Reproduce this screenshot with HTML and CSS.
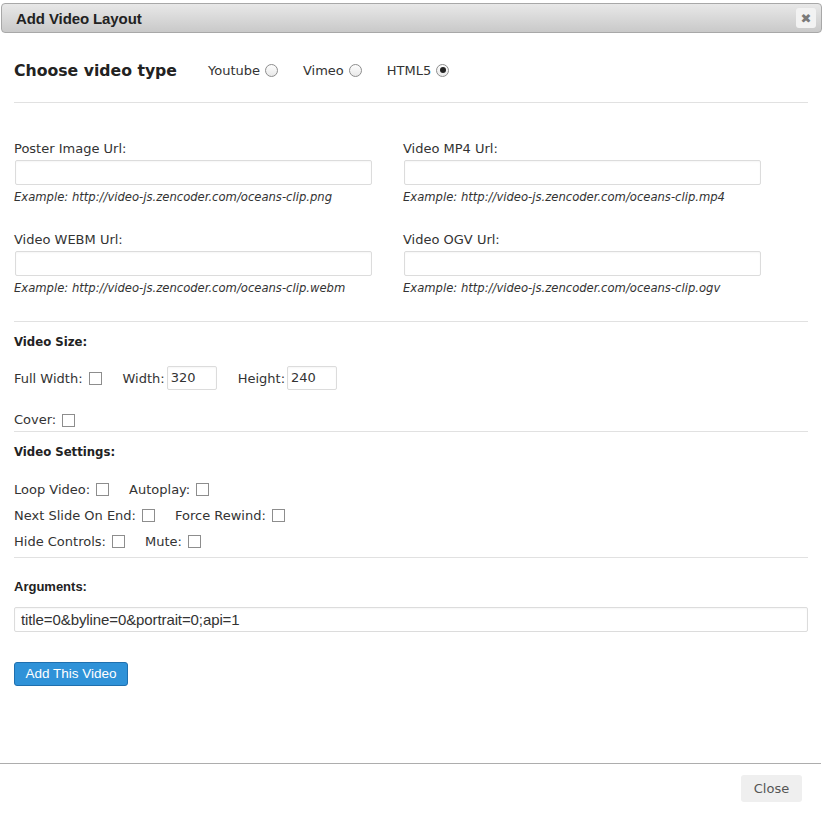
FILE: index.html
```html
<!DOCTYPE html>
<html>
<head>
<meta charset="utf-8">
<title>Add Video Layout</title>
<link rel="stylesheet" href="styles.css">
</head>
<body>
<div class="dialog">
  <div class="titlebar">
    <span class="title">Add Video Layout</span>
    <span class="x-btn">&#x2716;</span>
  </div>
  <div class="content">
    <div class="typerow">
      <h2 class="heading">Choose video type</h2>
      <label class="radio-item">Youtube <span class="radio"></span></label>
      <label class="radio-item">Vimeo <span class="radio"></span></label>
      <label class="radio-item">HTML5 <span class="radio checked"></span></label>
    </div>
    <div class="hr"></div>
    <div class="fields">
      <div class="field">
        <div class="label">Poster Image Url:</div>
        <div class="input url"></div>
        <div class="example">Example: http://video-js.zencoder.com/oceans-clip.png</div>
      </div>
      <div class="field">
        <div class="label">Video MP4 Url:</div>
        <div class="input url"></div>
        <div class="example">Example: http://video-js.zencoder.com/oceans-clip.mp4</div>
      </div>
      <div class="field">
        <div class="label">Video WEBM Url:</div>
        <div class="input url"></div>
        <div class="example">Example: http://video-js.zencoder.com/oceans-clip.webm</div>
      </div>
      <div class="field">
        <div class="label">Video OGV Url:</div>
        <div class="input url"></div>
        <div class="example">Example: http://video-js.zencoder.com/oceans-clip.ogv</div>
      </div>
    </div>
    <div class="hr hr-size"></div>
    <div class="section-title st-size">Video Size:</div>
    <div class="size-row">
      <span class="opt">Full Width: <span class="cb"></span></span>
      <span class="opt">Width: <span class="input small">320</span></span>
      <span class="opt">Height: <span class="input small">240</span></span>
    </div>
    <div class="cover-row"><span class="opt">Cover: <span class="cb"></span></span></div>
    <div class="hr hr-thin"></div>
    <div class="section-title st-settings">Video Settings:</div>
    <div class="settings">
      <div class="set-row"><span class="opt">Loop Video: <span class="cb"></span></span><span class="opt">Autoplay: <span class="cb"></span></span></div>
      <div class="set-row"><span class="opt">Next Slide On End: <span class="cb"></span></span><span class="opt">Force Rewind: <span class="cb"></span></span></div>
      <div class="set-row"><span class="opt">Hide Controls: <span class="cb"></span></span><span class="opt">Mute: <span class="cb"></span></span></div>
    </div>
    <div class="hr hr-thin"></div>
    <div class="args-title">Arguments:</div>
    <div class="input args">title=0&amp;byline=0&amp;portrait=0;api=1</div>
    <div class="btn-primary">Add This Video</div>
  </div>
  <div class="footer">
    <span class="btn-close">Close</span>
  </div>
</div>
</body>
</html>
```
FILE: styles.css
```css
html, body {
  margin: 0;
  padding: 0;
  background: #fff;
}
body {
  width: 823px;
  height: 816px;
  overflow: hidden;
  font-family: "DejaVu Sans", Verdana, sans-serif;
  font-size: 13px;
  color: #333;
}
.dialog {
  width: 823px;
}
.titlebar {
  margin: 3px 1px 0 1px;
  height: 28px;
  border: 1px solid #a8a8a8;
  border-radius: 4px;
  background: linear-gradient(#e8e8e8, #c9c9c9);
  display: flex;
  align-items: center;
  justify-content: space-between;
  padding: 0 5px 0 14px;
}
.title {
  font-family: "Liberation Sans", Arial, sans-serif;
  font-weight: bold;
  font-size: 15px;
  color: #222;
  letter-spacing: -0.1px;
}
.x-btn {
  width: 20px;
  height: 20px;
  background: #f2f2f2;
  border-radius: 3px;
  display: flex;
  align-items: center;
  justify-content: center;
  color: #7a7a7a;
  font-size: 13px;
  font-family: "DejaVu Sans", sans-serif;
}
.content {
  padding: 0 15px 0 14px;
}
.typerow {
  display: flex;
  align-items: center;
  height: 26px;
  margin-top: 24px;
}
.heading {
  margin: 0 31px 0 0;
  font-size: 15.7px;
  font-weight: bold;
  color: #222;
}
.radio-item {
  display: flex;
  align-items: center;
  margin-right: 25px;
  color: #333;
}
.radio {
  display: inline-block;
  box-sizing: border-box;
  width: 13px;
  height: 13px;
  border: 1px solid #8d8d8d;
  border-radius: 50%;
  background: linear-gradient(#fdfdfd, #e9e9e9);
  margin-left: 5px;
  position: relative;
}
.radio.checked::after {
  content: "";
  position: absolute;
  left: 2.5px;
  top: 2.5px;
  width: 6px;
  height: 6px;
  border-radius: 50%;
  background: #222;
}
.hr {
  height: 1px;
  background: #e1e1e1;
  margin-top: 19px;
}
.fields {
  display: grid;
  grid-template-columns: 389px 389px;
  row-gap: 28px;
  margin-top: 38px;
}
.label {
  line-height: 16px;
  color: #333;
}
.input {
  box-sizing: border-box;
  border: 1px solid #dcdcdc;
  border-radius: 2px;
  background: #fff;
  box-shadow: inset 0 1px 2px rgba(0,0,0,0.04);
}
.input.url {
  width: 357px;
  height: 25px;
  margin: 3px 0 0 1px;
}
.example {
  font-size: 11.6px;
  font-style: italic;
  line-height: 14px;
  margin-top: 5px;
  color: #333;
}
.hr-size {
  margin-top: 26px;
}
.section-title {
  font-family: "DejaVu Sans Condensed", "DejaVu Sans", sans-serif;
  font-weight: bold;
  font-size: 13px;
  line-height: 16px;
  color: #222;
}
.st-size {
  margin-top: 12px;
}
.size-row {
  display: flex;
  align-items: center;
  height: 24px;
  margin-top: 16px;
}
.opt {
  display: inline-flex;
  align-items: center;
  margin-right: 20px;
}
.cb {
  display: inline-block;
  box-sizing: border-box;
  width: 13px;
  height: 13px;
  border: 1px solid #8d8d8d;
  background: #fff;
  margin-left: 6px;
}
.input.small {
  display: inline-block;
  width: 50px;
  height: 24px;
  line-height: 22px;
  padding-left: 3px;
  margin-left: 2px;
  font-size: 13px;
  color: #333;
}
.size-row .opt:nth-child(1) { margin-right: 21px; }
.size-row .opt:nth-child(2) { margin-right: 21px; }
.cover-row {
  line-height: 16px;
  margin-top: 22px;
  display: flex;
  align-items: center;
}
.hr-thin {
  margin-top: 3px;
}
.st-settings {
  margin-top: 12px;
}
.settings {
  margin-top: 16px;
}
.set-row {
  height: 26px;
  display: flex;
  align-items: center;
}
.args-title {
  font-family: "Liberation Sans", Arial, sans-serif;
  font-weight: bold;
  font-size: 13px;
  line-height: 16px;
  color: #222;
  margin-top: 21px;
}
.input.args {
  margin-top: 12px;
  height: 25px;
  width: 794px;
  line-height: 23px;
  padding-left: 6px;
  font-family: "Liberation Sans", Arial, sans-serif;
  font-size: 15px;
  color: #333;
  letter-spacing: -0.1px;
}
.btn-primary {
  display: inline-block;
  box-sizing: border-box;
  margin-top: 30px;
  height: 24px;
  width: 114px;
  line-height: 22px;
  text-align: center;
  background: #2f92d8;
  border: 1px solid #1f6fae;
  border-radius: 3px;
  color: #fff;
  font-family: "Liberation Sans", Arial, sans-serif;
  font-size: 13.5px;
}
.footer {
  margin-top: 77px;
  margin-right: 2px;
  border-top: 1px solid #adadad;
  display: flex;
  justify-content: flex-end;
  padding: 11px 19px 0 0;
}
.btn-close {
  display: inline-block;
  width: 61px;
  height: 27px;
  line-height: 27px;
  text-align: center;
  background: #efefef;
  border-radius: 3px;
  color: #555;
  font-size: 13px;
}
```
